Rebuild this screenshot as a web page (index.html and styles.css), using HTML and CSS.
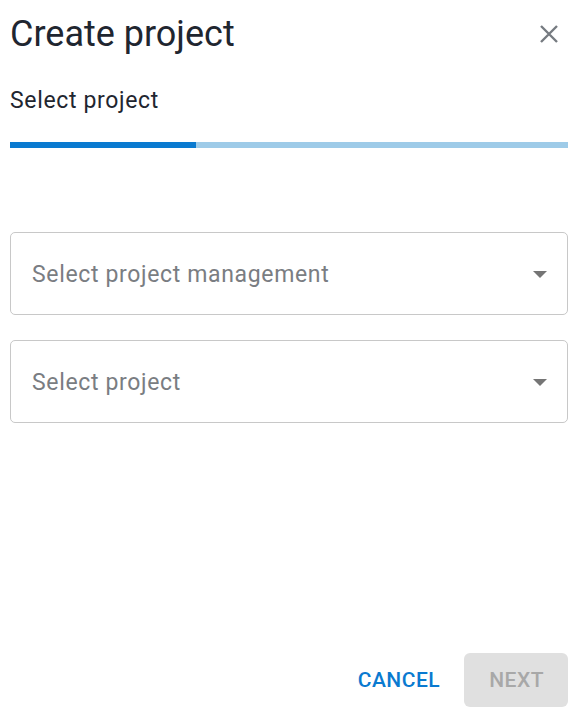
FILE: index.html
```html
<!DOCTYPE html>
<html lang="en">
<head>
    <meta charset="UTF-8">
    <title>Create project</title>
    <link rel="stylesheet" href="styles.css">
</head>
<body>
<div class="dialog">
    <div class="dialog-head">
        <h1 class="dialog-title">Create project</h1>
        <button class="close-btn" aria-label="Close">
            <svg width="20" height="20" viewBox="0 0 20 20">
                <path d="M2 2L18 18M18 2L2 18" stroke="#767b81" stroke-width="2.4" fill="none"/>
            </svg>
        </button>
    </div>
    <div class="step-label">Select project</div>
    <div class="progress">
        <div class="progress-done"></div>
    </div>
    <div class="fields">
        <div class="select">
            <span class="select-text">Select project management</span>
            <span class="select-arrow"></span>
        </div>
        <div class="select">
            <span class="select-text">Select project</span>
            <span class="select-arrow"></span>
        </div>
    </div>
    <div class="actions">
        <button class="btn btn-text">CANCEL</button>
        <button class="btn btn-disabled" disabled>NEXT</button>
    </div>
</div>
</body>
</html>
```

FILE: styles.css
```css
html,body{
    margin:0;
    padding:0;
    background:#fff;
}
body{
    font-family: Roboto, "Liberation Sans", sans-serif;
}
.dialog{
    width:558px;
    height:720px;
    margin-left:10px;
    display:flex;
    flex-direction:column;
}
.dialog-head{
    display:flex;
    justify-content:space-between;
    align-items:center;
    height:68px;
}
.dialog-title{
    margin:0;
    font-size:36px;
    font-weight:400;
    color:#1f2630;
    line-height:68px;
}
.close-btn{
    border:0;
    background:none;
    padding:0;
    margin-right:9px;
    width:20px;
    height:20px;
    display:flex;
}
.step-label{
    font-size:23px;
    letter-spacing:0.65px;
    color:#1f2630;
    line-height:24px;
    margin-top:21px;
}
.progress{
    margin-top:29px;
    height:6px;
    background:#9ecbe8;
}
.progress-done{
    width:186px;
    height:6px;
    background:#0a7ad0;
}
.fields{
    margin-top:84px;
    display:flex;
    flex-direction:column;
    gap:25px;
}
.select{
    height:80px;
    border:1px solid #c8c8c8;
    border-radius:5px;
    display:flex;
    align-items:center;
    justify-content:space-between;
    padding:1px 20px 0 21px;
}
.select-text{
    font-size:23px;
    letter-spacing:0.65px;
    color:#7a7d82;
}
.select-arrow{
    width:0;
    height:0;
    border-left:7px solid transparent;
    border-right:7px solid transparent;
    border-top:7px solid #757575;
}
.actions{
    margin-top:auto;
    margin-bottom:13px;
    display:flex;
    justify-content:flex-end;
    align-items:center;
    gap:12px;
}
.btn{
    font-family: Roboto, "Liberation Sans", sans-serif;
    font-size:21px;
    font-weight:500;
    letter-spacing:0.5px;
    border:0;
    height:54px;
    padding:0 25px;
    border-radius:6px;
    background:none;
}
.btn-text{
    color:#0a7ad0;
    padding:0 12px;
}
.btn-disabled{
    background:#e0e0e0;
    color:#a8a8a8;
    padding:0 24px 0 25px;
}
```
